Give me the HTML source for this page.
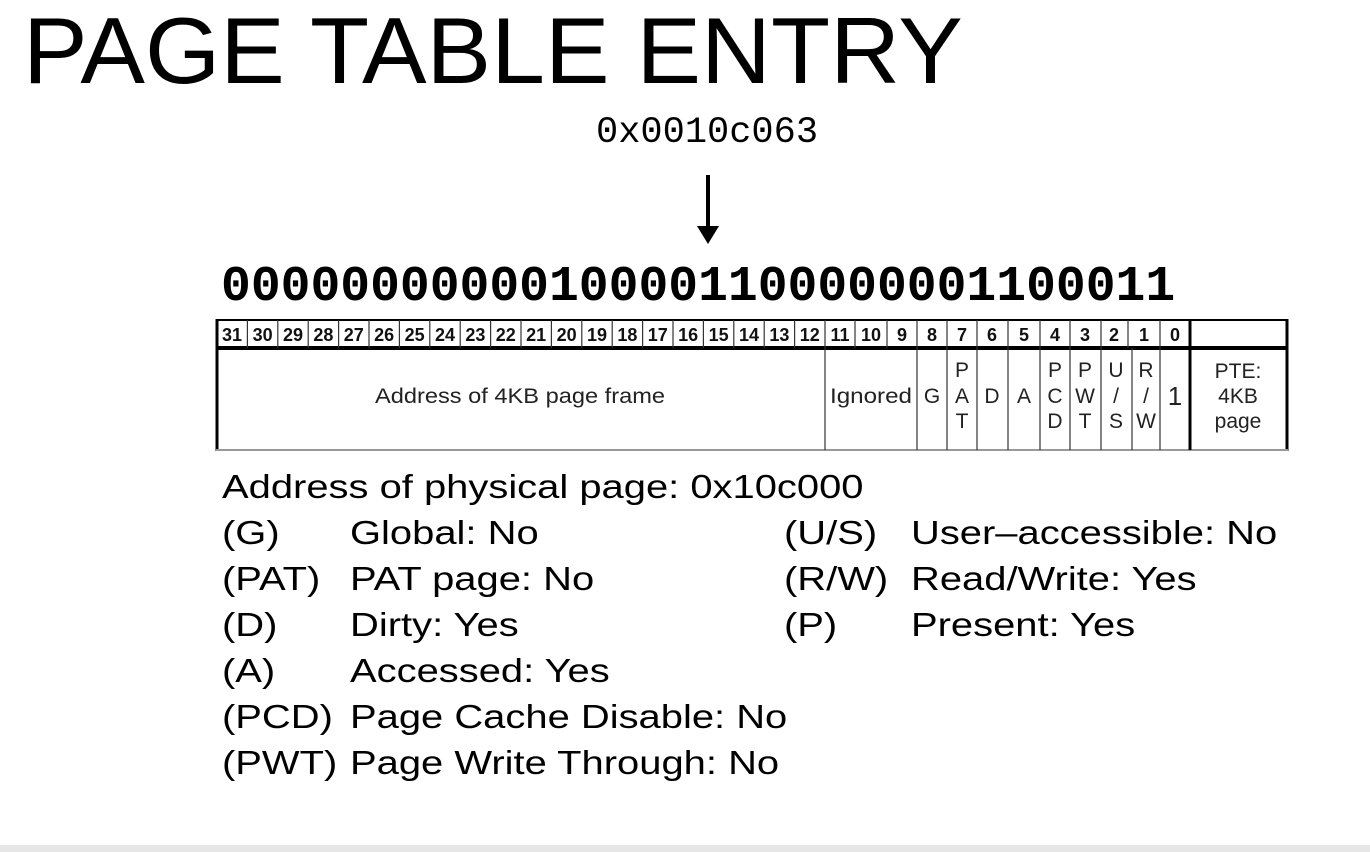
<!DOCTYPE html>
<html><head><meta charset="utf-8">
<style>
html,body{margin:0;padding:0;background:#fff;}
body{width:1370px;height:852px;position:relative;overflow:hidden;font-family:"Liberation Sans",sans-serif;color:#000;}
.a{position:absolute;white-space:pre;line-height:1;}
.t{font-size:33px;transform:scaleX(1.21);transform-origin:0 0;}
</style></head><body>
<div class="a" style="left:23px;top:4px;font-size:94px;transform:scaleX(1.03);transform-origin:0 0;">PAGE TABLE ENTRY</div>
<div class="a" style="left:596px;top:115px;font-size:37px;font-family:'Liberation Mono',monospace;">0x0010c063</div>
<svg style="position:absolute;left:0;top:0" width="1370" height="852">
<line x1="708" y1="175" x2="708" y2="232" stroke="#000" stroke-width="4"/>
<polygon points="697,226 719,226 708,244" fill="#000"/>
</svg>
<div class="a" style="left:221px;top:263px;font-size:49.7px;font-weight:bold;font-family:'Liberation Mono',monospace;">00000000000100001100000001100011</div>

<svg style="position:absolute;left:0;top:0" width="1370" height="852" font-family="Liberation Sans, sans-serif">
<g stroke="#000" fill="none">
<rect x="217" y="320" width="1070" height="28" stroke-width="2"/>
<line x1="217" y1="348" x2="1287" y2="348" stroke-width="4"/>
<line x1="217" y1="319" x2="217" y2="451" stroke-width="3"/>
<line x1="1287" y1="319" x2="1287" y2="451" stroke-width="3"/>
<line x1="216" y1="450" x2="1288" y2="450" stroke="#999" stroke-width="2"/>
</g>
<g stroke="#333" stroke-width="1.2">
<line x1="247.4" y1="320" x2="247.4" y2="348"/><line x1="277.8" y1="320" x2="277.8" y2="348"/><line x1="308.2" y1="320" x2="308.2" y2="348"/><line x1="338.6" y1="320" x2="338.6" y2="348"/><line x1="369" y1="320" x2="369" y2="348"/><line x1="399.4" y1="320" x2="399.4" y2="348"/><line x1="429.8" y1="320" x2="429.8" y2="348"/><line x1="460.2" y1="320" x2="460.2" y2="348"/><line x1="490.6" y1="320" x2="490.6" y2="348"/><line x1="521" y1="320" x2="521" y2="348"/><line x1="551.4" y1="320" x2="551.4" y2="348"/><line x1="581.8" y1="320" x2="581.8" y2="348"/><line x1="612.2" y1="320" x2="612.2" y2="348"/><line x1="642.6" y1="320" x2="642.6" y2="348"/><line x1="673" y1="320" x2="673" y2="348"/><line x1="703.4" y1="320" x2="703.4" y2="348"/><line x1="733.8" y1="320" x2="733.8" y2="348"/><line x1="764.2" y1="320" x2="764.2" y2="348"/><line x1="794.6" y1="320" x2="794.6" y2="348"/>
<line x1="855" y1="320" x2="855" y2="348"/><line x1="887" y1="320" x2="887" y2="348"/><line x1="1128" y1="320" x2="1128" y2="348"/>
<line x1="825" y1="320" x2="825" y2="450"/><line x1="917" y1="320" x2="917" y2="450"/><line x1="947" y1="320" x2="947" y2="450"/><line x1="977" y1="320" x2="977" y2="450"/><line x1="1008" y1="320" x2="1008" y2="450"/><line x1="1040" y1="320" x2="1040" y2="450"/><line x1="1070" y1="320" x2="1070" y2="450"/><line x1="1101" y1="320" x2="1101" y2="450"/><line x1="1132" y1="348" x2="1132" y2="450"/><line x1="1160" y1="320" x2="1160" y2="450"/>
</g>
<line x1="1190" y1="320" x2="1190" y2="450" stroke="#000" stroke-width="3"/>
<g font-size="18" text-anchor="middle" fill="#111" font-weight="bold">
<text x="232" y="341">31</text><text x="262.6" y="341">30</text><text x="293" y="341">29</text><text x="323.4" y="341">28</text><text x="353.8" y="341">27</text><text x="384.2" y="341">26</text><text x="414.6" y="341">25</text><text x="445" y="341">24</text><text x="475.4" y="341">23</text><text x="505.8" y="341">22</text><text x="536.2" y="341">21</text><text x="566.6" y="341">20</text><text x="597" y="341">19</text><text x="627.4" y="341">18</text><text x="657.8" y="341">17</text><text x="688.2" y="341">16</text><text x="718.6" y="341">15</text><text x="749" y="341">14</text><text x="779.4" y="341">13</text><text x="809.8" y="341">12</text>
<text x="840" y="341">11</text><text x="871" y="341">10</text><text x="902" y="341">9</text><text x="932" y="341">8</text><text x="962" y="341">7</text><text x="992" y="341">6</text><text x="1024" y="341">5</text><text x="1055" y="341">4</text><text x="1085" y="341">3</text><text x="1114" y="341">2</text><text x="1144" y="341">1</text><text x="1175" y="341">0</text>
</g>
<g font-size="21" text-anchor="middle" fill="#222">
<text x="520" y="403" textLength="290" lengthAdjust="spacingAndGlyphs">Address of 4KB page frame</text>
<text x="871" y="403" textLength="82" lengthAdjust="spacingAndGlyphs">Ignored</text>
<text x="932" y="403">G</text>
<text x="962" y="377">P</text><text x="962" y="403">A</text><text x="962" y="428">T</text>
<text x="992" y="403">D</text>
<text x="1024" y="403">A</text>
<text x="1055" y="377">P</text><text x="1055" y="403">C</text><text x="1055" y="428">D</text>
<text x="1085" y="377">P</text><text x="1085" y="403">W</text><text x="1085" y="428">T</text>
<text x="1116" y="377">U</text><text x="1116" y="403">/</text><text x="1116" y="428">S</text>
<text x="1146" y="377">R</text><text x="1146" y="403">/</text><text x="1146" y="428">W</text>
<text x="1175" y="405" font-size="26">1</text>
<text x="1238" y="378">PTE:</text><text x="1238" y="403">4KB</text><text x="1238" y="428">page</text>
</g>
</svg>

<div class="a t" style="left:222px;top:470px;">Address of physical page: 0x10c000</div>
<div class="a t" style="left:222px;top:516px;">(G)</div><div class="a t" style="left:350px;top:516px;">Global: No</div>
<div class="a t" style="left:222px;top:562px;">(PAT)</div><div class="a t" style="left:350px;top:562px;">PAT page: No</div>
<div class="a t" style="left:222px;top:608px;">(D)</div><div class="a t" style="left:350px;top:608px;">Dirty: Yes</div>
<div class="a t" style="left:222px;top:654px;">(A)</div><div class="a t" style="left:350px;top:654px;">Accessed: Yes</div>
<div class="a t" style="left:222px;top:700px;">(PCD)</div><div class="a t" style="left:350px;top:700px;">Page Cache Disable: No</div>
<div class="a t" style="left:222px;top:746px;">(PWT)</div><div class="a t" style="left:350px;top:746px;">Page Write Through: No</div>
<div class="a t" style="left:784px;top:516px;">(U/S)</div><div class="a t" style="left:911px;top:516px;">User–accessible: No</div>
<div class="a t" style="left:784px;top:562px;">(R/W)</div><div class="a t" style="left:911px;top:562px;">Read/Write: Yes</div>
<div class="a t" style="left:784px;top:608px;">(P)</div><div class="a t" style="left:911px;top:608px;">Present: Yes</div>
<div style="position:absolute;left:0;top:845px;width:1370px;height:7px;background:#e6e6e6;"></div>
</body></html>
